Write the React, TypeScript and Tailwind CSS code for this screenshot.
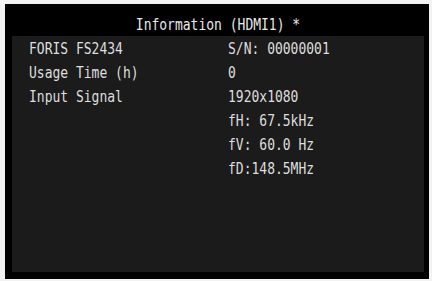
import React from "react";

const rows: [string, string][] = [
  ["FORIS FS2434", "S/N: 00000001"],
  ["Usage Time (h)", "0"],
  ["Input Signal", "1920x1080"],
  ["", "fH: 67.5kHz"],
  ["", "fV: 60.0 Hz"],
  ["", "fD:148.5MHz"],
];

export default function App() {
  return (
    <div className="w-[432px] h-[281px] bg-[#f2f2f2] pl-[5px] pt-[4px] pr-[3px] pb-[2px] flex">
      <div className="flex-1 bg-black pl-[7px] pr-[5px] pt-[9px] pb-[7px] flex flex-col">
        <div className="h-[23px] bg-black flex items-center justify-center text-[#e8e8e8] text-[13px] font-['DejaVu_Sans_Mono',monospace] leading-none">
          <span className="inline-block scale-y-[1.15]">Information (HDMI1) *</span>
        </div>
        <div className="flex-1 bg-[#1b1b1b] text-[#dedede] text-[13px] font-['DejaVu_Sans_Mono',monospace] leading-none">
          {rows.map(([l, r], i) => (
            <div key={i} className="h-[24px] flex items-center">
              <span className="w-[216px] pl-[17px] inline-block scale-y-[1.15] origin-left">{l}</span>
              <span className="inline-block scale-y-[1.15]">{r}</span>
            </div>
          ))}
        </div>
      </div>
    </div>
  );
}
